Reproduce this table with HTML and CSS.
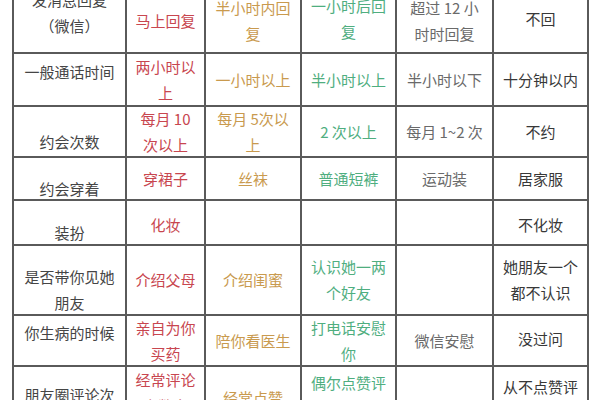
FILE: index.html
```html
<!DOCTYPE html>
<html lang="zh">
<head>
<meta charset="utf-8">
<link rel="stylesheet" href="styles.css">
</head>
<body>
<div class="page">
  <div class="grid">
    <div class="cell c1 up">发消息回复<br>（微信）</div>
    <div class="cell c2">马上回复</div>
    <div class="cell c3">半小时内回<br>复</div>
    <div class="cell c4 up2">一小时后回<br>复</div>
    <div class="cell c5">超过 12 小<br>时时回复</div>
    <div class="cell c6 up2">不回</div>

    <div class="cell c1 up">一般通话时间</div>
    <div class="cell c2">两小时以<br>上</div>
    <div class="cell c3">一小时以上</div>
    <div class="cell c4">半小时以上</div>
    <div class="cell c5">半小时以下</div>
    <div class="cell c6">十分钟以内</div>

    <div class="cell c1 dn">约会次数</div>
    <div class="cell c2">每月 10<br>次以上</div>
    <div class="cell c3">每月 5次以<br>上</div>
    <div class="cell c4">2 次以上</div>
    <div class="cell c5">每月 1~2 次</div>
    <div class="cell c6">不约</div>

    <div class="cell c1 dn">约会穿着</div>
    <div class="cell c2">穿裙子</div>
    <div class="cell c3">丝袜</div>
    <div class="cell c4">普通短裤</div>
    <div class="cell c5">运动装</div>
    <div class="cell c6">居家服</div>

    <div class="cell c1 dn">装扮</div>
    <div class="cell c2 dn2">化妆</div>
    <div class="cell c3"></div>
    <div class="cell c4"></div>
    <div class="cell c5"></div>
    <div class="cell c6 dn2">不化妆</div>

    <div class="cell c1 dn">是否带你见她<br>朋友</div>
    <div class="cell c2">介绍父母</div>
    <div class="cell c3">介绍闺蜜</div>
    <div class="cell c4">认识她一两<br>个好友</div>
    <div class="cell c5"></div>
    <div class="cell c6">她朋友一个<br>都不认识</div>

    <div class="cell c1 up">你生病的时候</div>
    <div class="cell c2">亲自为你<br>买药</div>
    <div class="cell c3">陪你看医生</div>
    <div class="cell c4">打电话安慰<br>你</div>
    <div class="cell c5">微信安慰</div>
    <div class="cell c6 up2">没过问</div>

    <div class="cell c1 dn">朋友圈评论次<br>数</div>
    <div class="cell c2 up4">经常评论<br>次数多</div>
    <div class="cell c3">经常点赞</div>
    <div class="cell c4 up2">偶尔点赞评<br>论</div>
    <div class="cell c5"></div>
    <div class="cell c6 dn2">从不点赞评<br>论</div>
  </div>
</div>
</body>
</html>
```
FILE: styles.css
```css
html, body {
  margin: 0;
  padding: 0;
  background: #ffffff;
  overflow: hidden;
}
.page {
  width: 600px;
  height: 400px;
  overflow: hidden;
}
.grid {
  display: grid;
  grid-template-columns: 113px 79px 96px 95px 97px 95px;
  grid-template-rows: 65px 53px 51px 43px 45px 70px 51px 64px;
  margin-top: -13px;
  margin-left: 12px;
  width: max-content;
  border-left: 2px solid #5a5a5a;
  border-top: 2px solid #5a5a5a;
  font-family: "Noto Sans CJK SC", "Noto Sans", sans-serif;
  font-size: 15px;
  line-height: 26px;
}
.cell {
  box-sizing: border-box;
  border-right: 2px solid #5a5a5a;
  border-bottom: 2px solid #5a5a5a;
  display: flex;
  flex-direction: column;
  justify-content: center;
  align-items: center;
  text-align: center;
  white-space: nowrap;
}
.c1 { color: #454545; }
.c2 { color: #c8464f; }
.c3 { color: #c99a4e; }
.c4 { color: #4fae7f; }
.c5 { color: #6a6a6a; }
.c6 { color: #383838; }
.up { padding-bottom: 16px; }
.up2 { padding-bottom: 4px; }
.up4 { padding-bottom: 10px; }
.dn { padding-top: 20px; }
.dn2 { padding-top: 4px; }
```
